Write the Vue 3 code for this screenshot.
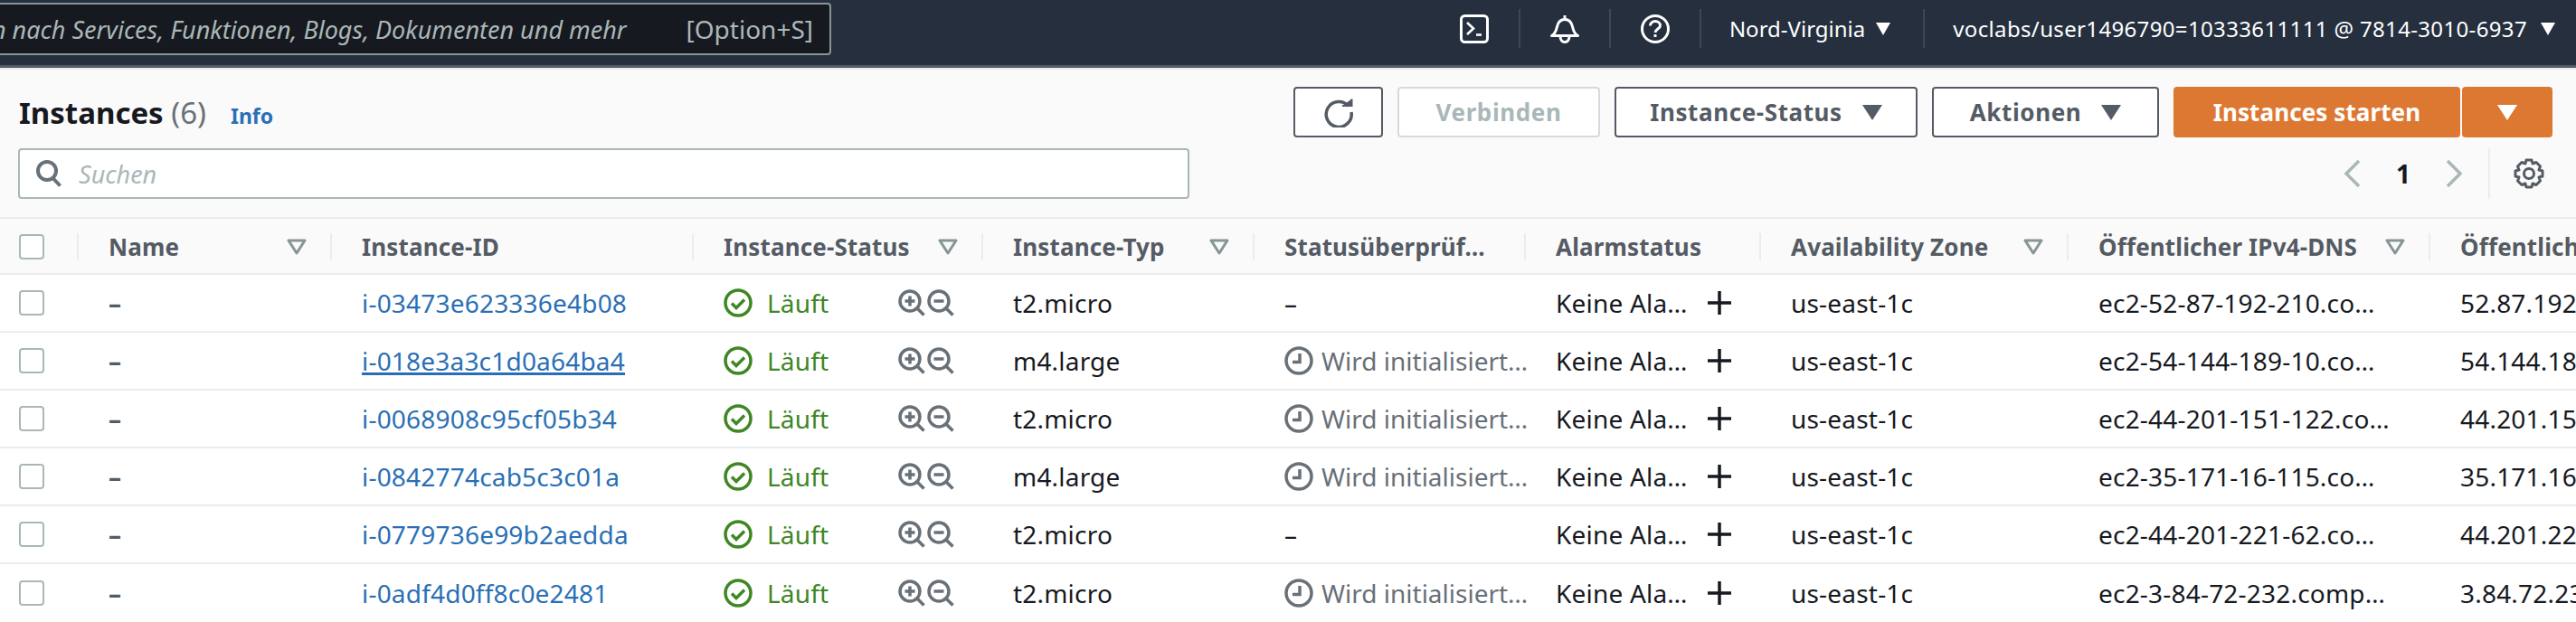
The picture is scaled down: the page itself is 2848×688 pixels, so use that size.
<script setup>
const columns = [
  { label: 'Name', filter: true },
  { label: 'Instance-ID' },
  { label: 'Instance-Status', filter: true },
  { label: 'Instance-Typ', filter: true },
  { label: 'Statusüberprüf…' },
  { label: 'Alarmstatus' },
  { label: 'Availability Zone', filter: true },
  { label: 'Öffentlicher IPv4-DNS', filter: true },
  { label: 'Öffentliche IPv4-Adresse', filter: true },
]

const instances = [
  { id: 'i-03473e623336e4b08', type: 't2.micro', init: false, dns: 'ec2-52-87-192-210.co…', ip: '52.87.192.210' },
  { id: 'i-018e3a3c1d0a64ba4', type: 'm4.large', init: true, dns: 'ec2-54-144-189-10.co…', ip: '54.144.189.10', hover: true },
  { id: 'i-0068908c95cf05b34', type: 't2.micro', init: true, dns: 'ec2-44-201-151-122.co…', ip: '44.201.151.122' },
  { id: 'i-0842774cab5c3c01a', type: 'm4.large', init: true, dns: 'ec2-35-171-16-115.co…', ip: '35.171.16.115' },
  { id: 'i-0779736e99b2aedda', type: 't2.micro', init: false, dns: 'ec2-44-201-221-62.co…', ip: '44.201.221.62' },
  { id: 'i-0adf4d0ff8c0e2481', type: 't2.micro', init: true, dns: 'ec2-3-84-72-232.comp…', ip: '3.84.72.232' },
]
</script>

<template>
  <div class="page">
    <header class="nav">
      <div class="global-search">
        <span class="global-placeholder">Suchen nach Services, Funktionen, Blogs, Dokumenten und mehr</span>
        <span class="global-shortcut">[Option+S]</span>
      </div>

      <div class="nav-right">
        <div class="nav-icon">
          <svg width="32" height="32" viewBox="0 0 32 32" fill="none" stroke="#fff" stroke-width="3">
            <rect x="1.5" y="1.5" width="29" height="29" rx="4" />
            <path d="M8 9l7 6.5-7 6.5" stroke-width="2.6" />
            <path d="M18 22.5h6" stroke-width="2.6" />
          </svg>
        </div>
        <div class="nav-icon">
          <svg width="32" height="32" viewBox="0 0 32 32" fill="none" stroke="#fff" stroke-width="3">
            <path d="M1.5 23.5c4-2 5-5.500 6-10 1-4.500 4-8 8.500-8s7.500 3.500 8.500 8c1 4.500 2 8 6 10z" stroke-linejoin="round" />
            <path d="M16 1v4" />
            <path d="M11 24c0 4 2 6.500 5 6.500s5-2.500 5-6.500" />
          </svg>
        </div>
        <div class="nav-icon">
          <svg width="32" height="32" viewBox="0 0 32 32" fill="none" stroke="#fff" stroke-width="3">
            <circle cx="16" cy="16" r="14.500" />
            <path d="M10.500 12.500c0-3 2.500-5 5.500-5s5.500 2 5.500 4.800c0 3.700-5.500 3.700-5.500 7.700" />
            <path d="M16 22v3" />
          </svg>
        </div>
        <div class="nav-menu region">Nord-Virginia <span class="nav-caret"></span></div>
        <div class="nav-menu account">voclabs/user1496790=10333611111 @ 7814-3010-6937 <span class="nav-caret"></span></div>
      </div>
    </header>

    <main class="panel">
      <div class="title-row">
        <div class="title">
          <h1>Instances <span class="count">(6)</span></h1>
          <a class="info">Info</a>
        </div>
        <div class="actions">
          <button class="btn refresh">
            <svg width="34" height="34" viewBox="0 0 34 34" fill="none" stroke="#545b64" stroke-width="3.500">
              <path d="M28 10.500a14 14 0 1 0 3 6.500" />
              <path d="M21 10h10.500V2.500" fill="#545b64" stroke-width="2" />
            </svg>
          </button>
          <button class="btn disabled connect">Verbinden</button>
          <button class="btn status-btn">Instance-Status <span class="caret"></span></button>
          <button class="btn action-btn">Aktionen <span class="caret"></span></button>
          <div class="launch">
            <button class="btn primary launch-main">Instances starten</button>
            <button class="btn primary launch-more"><span class="caret white"></span></button>
          </div>
        </div>
      </div>

      <div class="search-row">
        <div class="search">
          <svg width="30" height="30" viewBox="0 0 30 30" fill="none" stroke="#687078" stroke-width="4">
            <circle cx="13" cy="12" r="10" />
            <path d="M19.500 20l8 8.500" />
          </svg>
          <span class="search-text">Suchen</span>
        </div>
        <div class="pager">
          <svg class="chevron" width="20" height="32" viewBox="0 0 20 32" fill="none" stroke="#aab7b8" stroke-width="3.500">
            <path d="M17 2L3 16l14 14" />
          </svg>
          <span class="page-number">1</span>
          <svg class="chevron" width="20" height="32" viewBox="0 0 20 32" fill="none" stroke="#aab7b8" stroke-width="3.500">
            <path d="M3 2l14 14L3 30" />
          </svg>
          <div class="pager-settings">
            <svg width="34" height="34" viewBox="0 0 34 34" fill="none" stroke="#545b64" stroke-width="3">
              <circle cx="17" cy="17" r="5.500" />
              <path d="M14 2h6l1 4 4-1.500 4.500 4.500-1.500 4 4 1v6l-4 1 1.500 4-4.500 4.500-4-1.500-1 4h-6l-1-4-4 1.500L4.500 25 6 21l-4-1v-6l4-1-1.500-4L9 4.500 13 6z" stroke-linejoin="round" />
            </svg>
          </div>
        </div>
      </div>
    </main>

    <section class="table">
      <div class="head grid">
        <div class="head-cell check-cell"><span class="checkbox"></span></div>
        <div v-for="col in columns" :key="col.label" class="head-cell">
          <span class="head-label">{{ col.label }}</span>
          <svg v-if="col.filter" class="filter" width="22" height="18" viewBox="0 0 22 18" fill="none" stroke="#879596" stroke-width="3">
            <path d="M2 2h18l-9 14z" stroke-linejoin="round" />
          </svg>
        </div>
      </div>

      <div v-for="row in instances" :key="row.id" class="row grid">
        <div class="cell check-cell"><span class="checkbox"></span></div>
        <div class="cell name">–</div>
        <div class="cell"><a class="link" :class="{ hovered: row.hover }">{{ row.id }}</a></div>
        <div class="cell status">
          <svg width="32" height="32" viewBox="0 0 32 32" fill="none" stroke="#3f8624" stroke-width="3.500">
            <circle cx="16" cy="16" r="14" />
            <path d="M9 16.500l5 5 9-9" />
          </svg>
          <span class="running">Läuft</span>
          <span class="zoom-icons">
            <svg width="30" height="30" viewBox="0 0 30 30" fill="none" stroke="#687078" stroke-width="3.500">
              <circle cx="13" cy="13" r="11" />
              <path d="M21 21l7.500 7.500" />
              <path d="M7.500 13h11M13 7.500v11" />
            </svg>
            <svg width="30" height="30" viewBox="0 0 30 30" fill="none" stroke="#687078" stroke-width="3.500">
              <circle cx="13" cy="13" r="11" />
              <path d="M21 21l7.500 7.500" />
              <path d="M7.500 13h11" />
            </svg>
          </span>
        </div>
        <div class="cell">{{ row.type }}</div>
        <div class="cell check">
          <template v-if="row.init">
            <svg width="32" height="32" viewBox="0 0 32 32" fill="none" stroke="#687078" stroke-width="3.500">
              <circle cx="16" cy="16" r="14" />
              <path d="M17 8v9.500H9" />
            </svg>
            <span class="init-text">Wird initialisiert…</span>
          </template>
          <template v-else>–</template>
        </div>
        <div class="cell alarm">
          <span>Keine Ala…</span>
          <svg width="28" height="28" viewBox="0 0 28 28" fill="none" stroke="#16191f" stroke-width="3.500">
            <path d="M14 1v26M1 14h26" />
          </svg>
        </div>
        <div class="cell">us-east-1c</div>
        <div class="cell">{{ row.dns }}</div>
        <div class="cell">{{ row.ip }}</div>
      </div>
    </section>
  </div>
</template>

<style scoped>
.page {
  width: 2848px;
  height: 688px;
  overflow: hidden;
  background: #fafafa;
  font-family: "Noto Sans", "Open Sans", sans-serif;
  color: #16191f;
}

.nav {
  height: 72px;
  box-sizing: content-box;
  display: flex;
  align-items: flex-start;
  justify-content: space-between;
  background: #252f3e;
  border-bottom: 3px solid #545b64;
  box-shadow: 0 2px 0 #eaeded;
  position: relative;
}

.global-search {
  width: 919px;
  height: 58px;
  margin-top: 3px;
  box-sizing: border-box;
  display: flex;
  align-items: center;
  justify-content: flex-end;
  gap: 66px;
  padding-right: 18px;
  background: #16191f;
  border: 2px solid #879596;
  border-left: 0;
  border-radius: 0 4px 4px 0;
  overflow: hidden;
  color: #aab7b8;
  white-space: nowrap;
}

.global-placeholder {
  font-size: 27px;
  font-style: italic;
}

.global-shortcut {
  font-size: 28px;
}

.nav-right {
  display: flex;
  align-items: center;
  height: 43px;
  margin-top: 10px;
  color: #fff;
  font-size: 24px;
}

.nav-icon {
  width: 100px;
  height: 100%;
  display: flex;
  align-items: center;
  justify-content: center;
  border-right: 2px solid #414750;
  box-sizing: border-box;
}

.nav-menu {
  height: 100%;
  display: flex;
  align-items: center;
  gap: 12px;
  white-space: nowrap;
  box-sizing: border-box;
}

.region {
  padding: 0 36px 0 31px;
  border-right: 2px solid #414750;
}

.account {
  gap: 15px;
  padding: 0 23px 0 31px;
  letter-spacing: 0.35px;
}

.nav-caret {
  width: 0;
  height: 0;
  border-left: 8px solid transparent;
  border-right: 8px solid transparent;
  border-top: 14px solid #fff;
}

.panel {
  padding: 21px 26px 20px 20px;
}

.title-row,
.search-row {
  display: flex;
  justify-content: space-between;
  align-items: center;
  height: 56px;
}

.search-row {
  margin-top: 12px;
}

.title {
  display: flex;
  align-items: baseline;
  gap: 27px;
  padding-left: 1px;
}

.title h1 {
  margin: 0;
  font-size: 33px;
  font-weight: 700;
}

.count {
  font-weight: 400;
  color: #687078;
}

.info {
  font-size: 23px;
  font-weight: 700;
  color: #2a6fb5;
}

.actions {
  display: flex;
  gap: 16px;
}

.btn {
  height: 56px;
  box-sizing: border-box;
  display: flex;
  align-items: center;
  justify-content: center;
  gap: 22px;
  padding: 0;
  background: #fff;
  border: 2px solid #545b64;
  border-radius: 4px;
  font-family: inherit;
  font-size: 26px;
  font-weight: 700;
  letter-spacing: 0.6px;
  color: #545b64;
}

.refresh {
  width: 99px;
}

.connect {
  width: 224px;
}

.disabled {
  color: #aab7b8;
  border-color: #d5dbdb;
}

.status-btn {
  width: 335px;
}

.action-btn {
  width: 251px;
}

.launch {
  display: flex;
  gap: 2px;
}

.primary {
  background: #dd7833;
  border-color: #dd7833;
  color: #fff;
  letter-spacing: 0.1px;
}

.launch-main {
  width: 317px;
}

.launch-more {
  width: 100px;
}

.caret {
  width: 0;
  height: 0;
  border-left: 11px solid transparent;
  border-right: 11px solid transparent;
  border-top: 17px solid #545b64;
}

.caret.white {
  border-top-color: #fff;
}

.search {
  width: 1295px;
  height: 56px;
  box-sizing: border-box;
  display: flex;
  align-items: center;
  gap: 18px;
  padding-left: 17px;
  background: #fff;
  border: 2px solid #aab7b8;
  border-radius: 4px;
}

.search-text {
  font-size: 27px;
  font-style: italic;
  color: #aab7b8;
}

.pager {
  display: flex;
  align-items: center;
  height: 56px;
  padding-right: 9px;
}

.page-number {
  width: 92px;
  text-align: center;
  font-size: 28px;
  font-weight: 700;
}

.pager-settings {
  height: 100%;
  display: flex;
  align-items: center;
  margin-left: 28px;
  padding-left: 26px;
  border-left: 2px solid #eaeded;
}

.table {
  width: 2848px;
  border-top: 2px solid #eaeded;
}

.grid {
  display: grid;
  grid-template-columns: 87px 280px 400px 320px 300px 300px 260px 340px 400px 400px;
}

.head {
  height: 62px;
  box-sizing: border-box;
  border-bottom: 2px solid #eaeded;
}

.head-cell {
  display: flex;
  align-items: center;
  justify-content: space-between;
  height: 30px;
  margin-top: 16px;
  padding: 0 26px 0 33px;
  border-right: 2px solid #eaeded;
  box-sizing: border-box;
  white-space: nowrap;
  font-size: 26px;
  font-weight: 700;
  letter-spacing: 0.15px;
  color: #545b64;
}

.check-cell {
  padding: 0 0 0 21px;
  justify-content: flex-start;
}

.checkbox {
  display: block;
  width: 28px;
  height: 28px;
  box-sizing: border-box;
  background: #fff;
  border: 2px solid #aab7b8;
  border-radius: 4px;
}

.row {
  height: 64px;
  box-sizing: border-box;
  background: #fff;
  border-bottom: 2px solid #eaeded;
}

.row:last-child {
  border-bottom: 0;
}

.cell {
  display: flex;
  align-items: center;
  padding-left: 33px;
  font-size: 28px;
  letter-spacing: 0.2px;
  white-space: nowrap;
  overflow: hidden;
}

.cell svg {
  flex-shrink: 0;
}

.cell.check-cell {
  padding-left: 21px;
}

.name {
  font-weight: 700;
  color: #545b64;
}

.link {
  color: #2a6fb5;
}

.link.hovered {
  text-decoration: underline;
  text-decoration-thickness: 3px;
}

.running {
  margin-left: 16px;
  color: #3f8624;
}

.zoom-icons {
  display: flex;
  gap: 2px;
  margin-left: 77px;
}

.cell.check {
  gap: 9px;
  letter-spacing: 0;
  overflow: visible;
}

.init-text {
  color: #687078;
}

.alarm {
  gap: 21px;
}
</style>
